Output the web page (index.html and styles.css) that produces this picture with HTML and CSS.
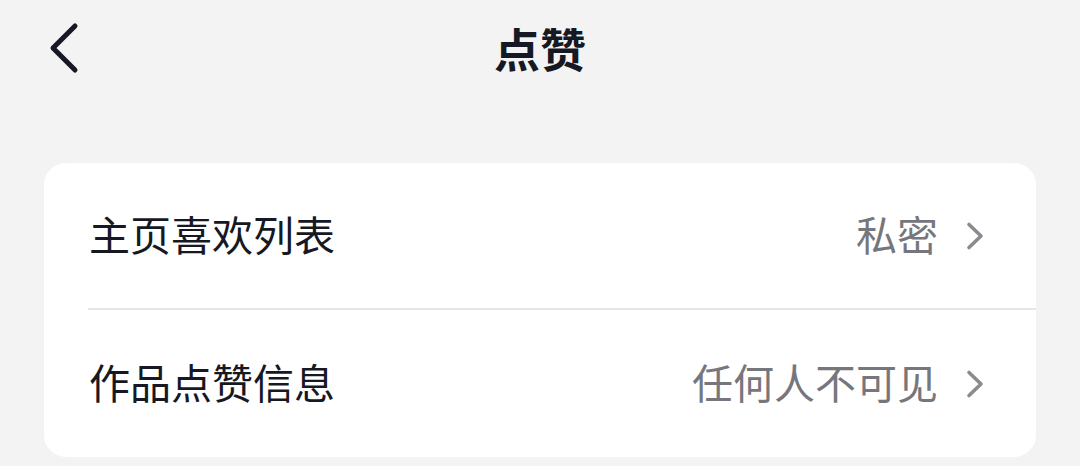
FILE: index.html
```html
<!DOCTYPE html>
<html lang="zh-CN">
<head>
<meta charset="utf-8">
<title>点赞</title>
<link rel="stylesheet" href="styles.css">
</head>
<body>
<div class="page">
  <header class="nav">
    <button class="back" aria-label="返回">
      <svg width="36" height="56" viewBox="0 0 36 56"><path d="M30 5 L8 27 L30 49" fill="none" stroke="#161823" stroke-width="5" stroke-linecap="round" stroke-linejoin="round"/></svg>
    </button>
    <h1 class="title">点赞</h1>
  </header>
  <section class="card">
    <div class="row">
      <span class="label">主页喜欢列表</span>
      <span class="value">私密</span>
      <svg class="arrow" width="22" height="30" viewBox="0 0 22 30"><path d="M5 3.5 L17 15 L5 26.5" fill="none" stroke="#8a8b91" stroke-width="3.6" stroke-linecap="round" stroke-linejoin="round"/></svg>
    </div>
    <div class="row">
      <span class="label">作品点赞信息</span>
      <span class="value">任何人不可见</span>
      <svg class="arrow" width="22" height="30" viewBox="0 0 22 30"><path d="M5 3.5 L17 15 L5 26.5" fill="none" stroke="#8a8b91" stroke-width="3.6" stroke-linecap="round" stroke-linejoin="round"/></svg>
    </div>
  </section>
</div>
</body>
</html>
```

FILE: styles.css
```css
html, body {
  margin: 0;
  padding: 0;
  background: #f3f3f3;
}
body {
  font-family: "Noto Sans CJK SC", "Noto Sans", sans-serif;
  color: #161823;
}
.page {
  width: 1080px;
  height: 466px;
  overflow: hidden;
}
.nav {
  position: relative;
  height: 94px;
  display: flex;
  align-items: center;
  justify-content: center;
}
.back {
  position: absolute;
  left: 45px;
  top: 21px;
  padding: 0;
  border: 0;
  background: none;
  display: flex;
}
.title {
  margin: 0;
  font-size: 46px;
  font-weight: 700;
  line-height: 1;
  color: #161823;
}
.card {
  margin: 69px 44px 0;
  background: #ffffff;
  border-radius: 22px;
  padding-left: 44px;
}
.row {
  height: 147px;
  display: flex;
  align-items: center;
  padding-right: 50px;
  border-bottom: 2px solid #e6e6e8;
  box-sizing: border-box;
}
.row:last-child {
  border-bottom: 0;
}
.label {
  flex: 1;
  font-size: 41px;
  line-height: 1;
  padding-left: 1px;
  margin-top: -4px;
  color: #161823;
}
.value {
  font-size: 41px;
  line-height: 1;
  margin-top: -4px;
  color: #76777d;
  margin-right: 26px;
}
.arrow {
  display: block;
}
```
